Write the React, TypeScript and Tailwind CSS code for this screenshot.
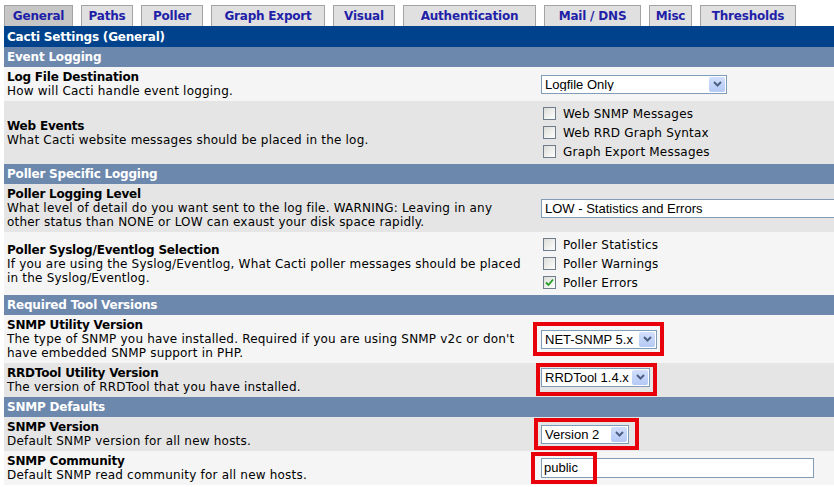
import type { ReactNode } from "react";

const TABS = [
  { name: "General", w: "w-[69px]", active: true },
  { name: "Paths", w: "w-[52px]" },
  { name: "Poller", w: "w-[62px]" },
  { name: "Graph Export", w: "w-[114px]" },
  { name: "Visual", w: "w-[62px]" },
  { name: "Authentication", w: "w-[133px]" },
  { name: "Mail / DNS", w: "w-[97px]" },
  { name: "Misc", w: "w-[43px]" },
  { name: "Thresholds", w: "w-[96px]" },
];

function Select({ value, w }: { value: string; w: string }) {
  return (
    <div
      className={`flex h-[19px] items-center border border-[#7f9db9] bg-white pl-[3px] font-['Liberation_Sans',Arial,sans-serif] text-[13px] tracking-normal text-black ${w}`}
    >
      <span className="flex-1 truncate leading-none">{value}</span>
      <span className="m-px flex h-[15px] w-[16px] items-center justify-center rounded-[2px] bg-gradient-to-b from-[#d2dffb] to-[#b4c9f5]">
        <svg width="9" height="6" viewBox="0 0 9 6">
          <path d="M1 1l3.5 3.5L8 1" fill="none" stroke="#4d6185" strokeWidth="2" />
        </svg>
      </span>
    </div>
  );
}

function Checkbox({ label, checked }: { label: string; checked?: boolean }) {
  return (
    <div className="flex h-[19px] items-center">
      <span className="ml-[2px] mr-[7px] flex h-[13px] w-[13px] items-center justify-center border border-[#6f7c8c] bg-gradient-to-br from-[#dcdcd7] to-white">
        {checked ? (
          <svg width="9" height="9" viewBox="0 0 9 9">
            <path d="M1 4.5l2.5 2.5L8 1.5" fill="none" stroke="#21a121" strokeWidth="1.8" />
          </svg>
        ) : null}
      </span>
      <span>{label}</span>
    </div>
  );
}

// hand-drawn annotation boxes from the screenshot, sitting over the controls
function RedBox({ className }: { className: string }) {
  return <span className={`pointer-events-none absolute border-[4px] border-[#e8000b] ${className}`} />;
}

function Section({ title }: { title: string }) {
  return (
    <div className="flex h-[20px] items-center bg-[#6d88ad] px-[3px] font-bold tracking-[-0.2px] text-white">
      {title}
    </div>
  );
}

function Row({
  label,
  lines,
  shade,
  children,
}: {
  label: string;
  lines: string[];
  shade: "light" | "dark";
  children: ReactNode;
}) {
  return (
    <div className={`flex ${shade === "light" ? "bg-[#f5f5f5]" : "bg-[#e5e5e5]"}`}>
      <div className="flex w-[534px] shrink-0 flex-col justify-center whitespace-nowrap p-[3px] leading-[14px]">
        <div className="font-bold tracking-[-0.2px]">{label}</div>
        {lines.map((l) => (
          <div key={l}>{l}</div>
        ))}
      </div>
      <div className="flex flex-1 flex-col justify-center p-[3px]">{children}</div>
    </div>
  );
}

export default function App() {
  return (
    <div className="h-[487px] w-[834px] overflow-hidden bg-white font-['DejaVu_Sans',Verdana,sans-serif] text-[12px] tracking-[0.2px] text-black">
      <div className="w-[900px] pl-1 pt-[5px]">
        <div className="flex h-[21px] gap-2">
          {TABS.map((t) => (
            <div
              key={t.name}
              className={`flex items-center justify-center border border-b-0 border-[#a3a3a3] font-bold tracking-[-0.2px] text-[#1f1fa8] ${t.w} ${
                t.active ? "bg-[#c6c6c6]" : "bg-[#e0e0e0]"
              }`}
            >
              {t.name}
            </div>
          ))}
        </div>

        <div className="flex h-[21px] items-center bg-[#00438c] px-[3px] font-bold tracking-[-0.2px] text-white">
          Cacti Settings (General)
        </div>

        <Section title="Event Logging" />
        <Row label="Log File Destination" lines={["How will Cacti handle event logging."]} shade="light">
          <Select value="Logfile Only" w="w-[186px]" />
        </Row>
        <Row label="Web Events" lines={["What Cacti website messages should be placed in the log."]} shade="dark">
          <Checkbox label="Web SNMP Messages" />
          <Checkbox label="Web RRD Graph Syntax" />
          <Checkbox label="Graph Export Messages" />
        </Row>

        <Section title="Poller Specific Logging" />
        <Row
          label="Poller Logging Level"
          lines={[
            "What level of detail do you want sent to the log file. WARNING: Leaving in any",
            "other status than NONE or LOW can exaust your disk space rapidly.",
          ]}
          shade="dark"
        >
          <Select value="LOW - Statistics and Errors" w="w-[330px]" />
        </Row>
        <Row
          label="Poller Syslog/Eventlog Selection"
          lines={[
            "If you are using the Syslog/Eventlog, What Cacti poller messages should be placed",
            "in the Syslog/Eventlog.",
          ]}
          shade="light"
        >
          <Checkbox label="Poller Statistics" />
          <Checkbox label="Poller Warnings" />
          <Checkbox label="Poller Errors" checked />
        </Row>

        <Section title="Required Tool Versions" />
        <Row
          label="SNMP Utility Version"
          lines={[
            "The type of SNMP you have installed. Required if you are using SNMP v2c or don't",
            "have embedded SNMP support in PHP.",
          ]}
          shade="light"
        >
          <div className="relative w-fit">
            <Select value="NET-SNMP 5.x" w="w-[116px]" />
            <RedBox className="-bottom-[7px] -left-[8px] -right-[7px] -top-[8px]" />
          </div>
        </Row>
        <Row label="RRDTool Utility Version" lines={["The version of RRDTool that you have installed."]} shade="dark">
          <div className="relative mb-[6px] w-fit">
            <Select value="RRDTool 1.4.x" w="w-[109px]" />
            <RedBox className="-bottom-[9px] -left-[5px] -right-[7px] -top-[5px]" />
          </div>
        </Row>

        <Section title="SNMP Defaults" />
        <Row label="SNMP Version" lines={["Default SNMP version for all new hosts."]} shade="dark">
          <div className="relative w-fit">
            <Select value="Version 2" w="w-[88px]" />
            <RedBox className="-bottom-[6px] -left-[7px] -right-[10px] -top-[7px]" />
          </div>
        </Row>
        <Row label="SNMP Community" lines={["Default SNMP read community for all new hosts."]} shade="light">
          <div className="relative w-fit">
            <div className="flex h-[20px] w-[273px] items-center border border-[#7f9db9] bg-white pl-[2px] font-['Liberation_Sans',Arial,sans-serif] text-[13px] tracking-normal">
              public
            </div>
            <RedBox className="-bottom-[6px] -left-[10px] -top-[6px] w-[66px]" />
          </div>
        </Row>
      </div>
    </div>
  );
}
